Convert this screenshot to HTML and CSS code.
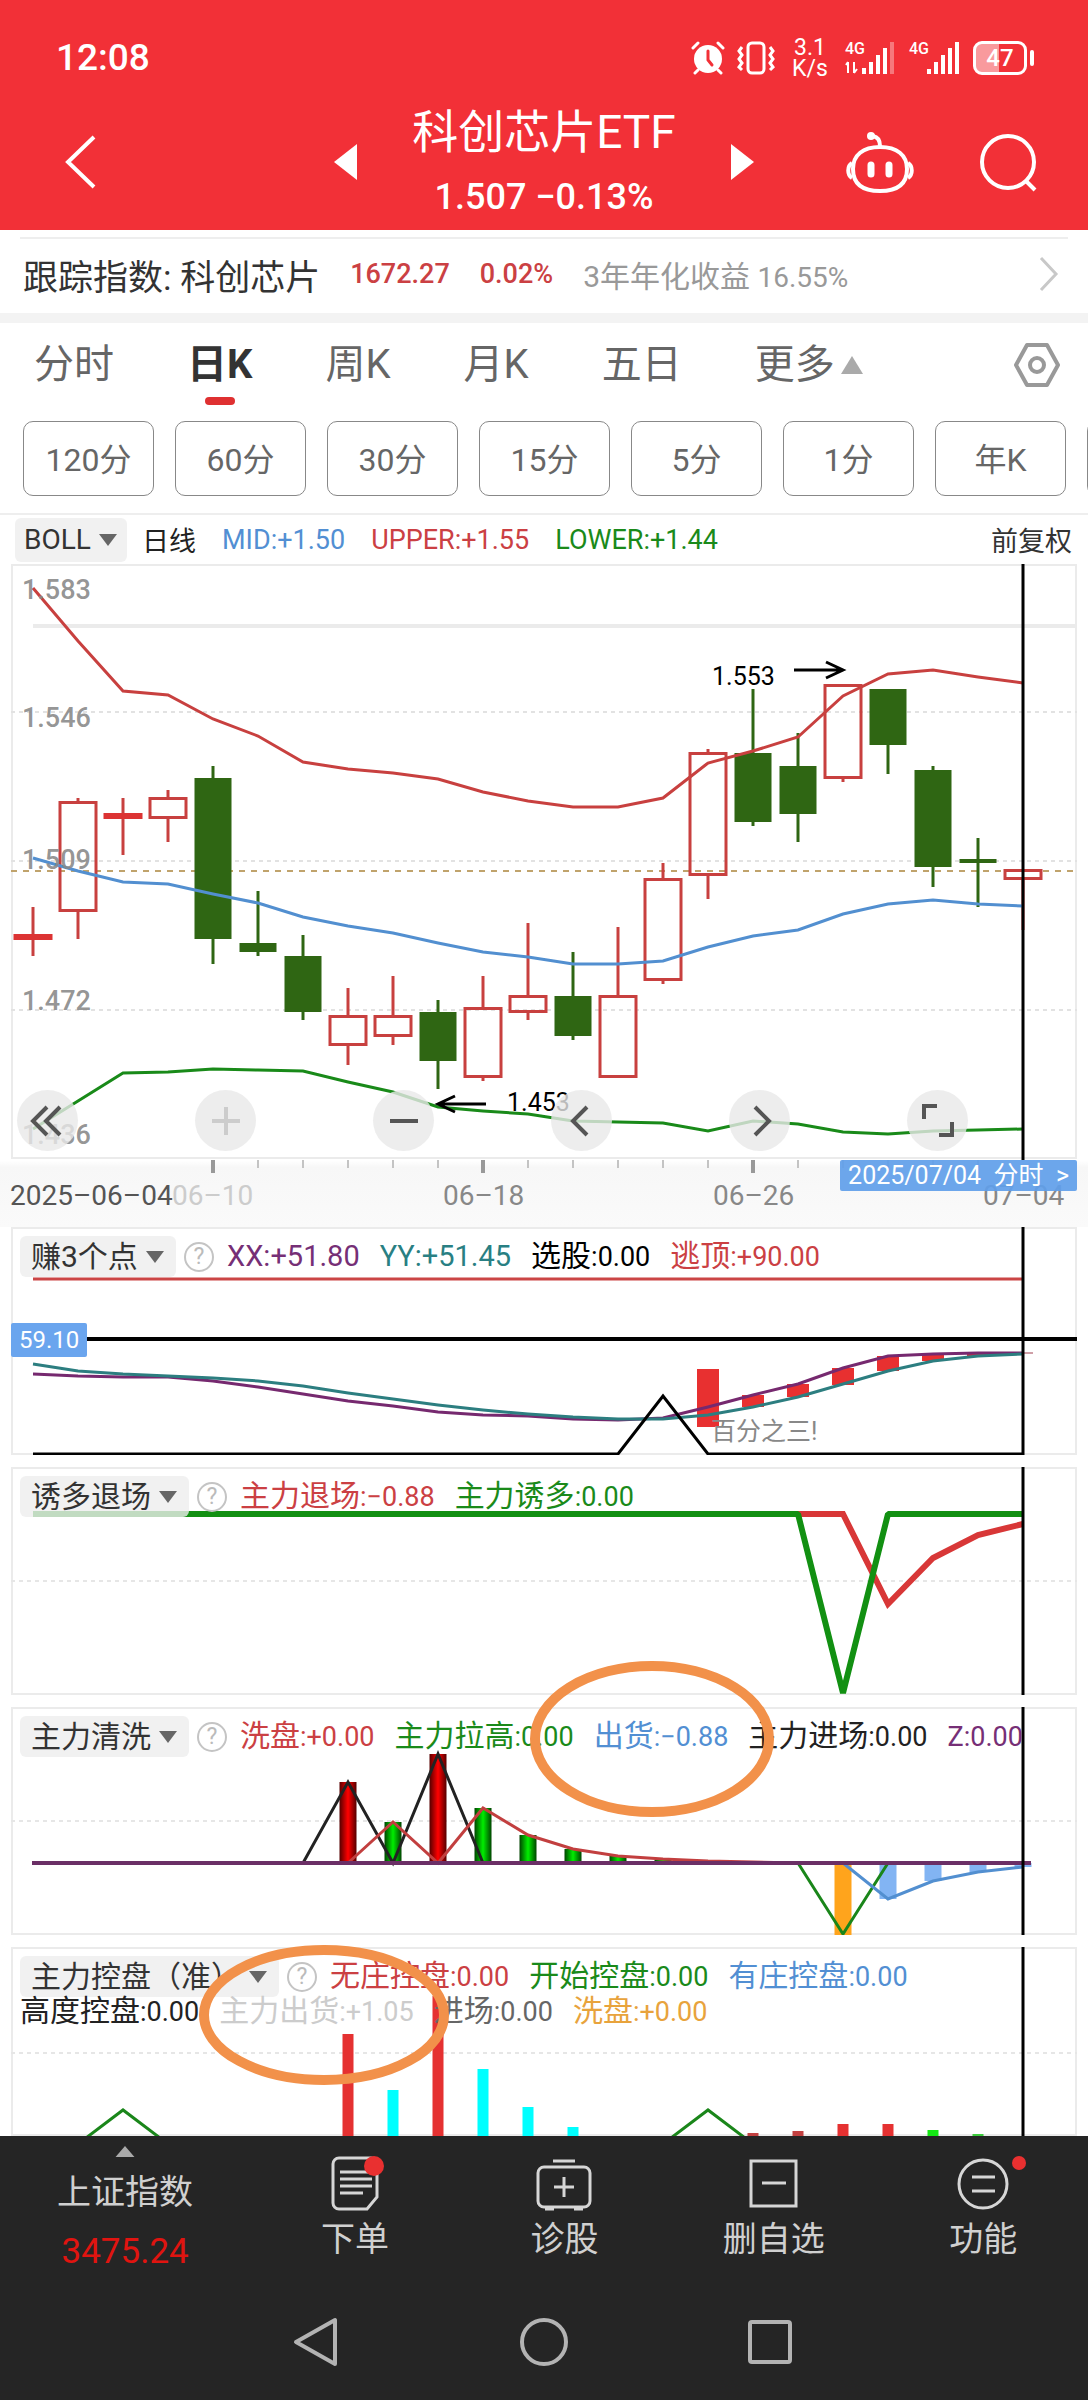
FILE: index.html
```html
<!DOCTYPE html>
<html lang="zh-CN">
<head>
  <meta charset="UTF-8" />
  <meta name="viewport" content="width=device-width, initial-scale=1.0" />
  <title>科创芯片ETF</title>
  <link rel="stylesheet" href="styles.css">
</head>
<body>
  <header class="header">
    <div class="status">
      <span class="clock">12:08</span>
      <div class="status-icons">
        <svg width="34" height="34" viewBox="0 0 34 34" fill="none" stroke="#fff" stroke-width="3" stroke-linecap="round">
          <circle cx="17" cy="18" r="14" fill="#fff" stroke="none" />
          <path d="M2 7l5-5M32 7l-5-5M7 29l-3 3M27 29l3 3" />
          <path d="M17 10v9l4 5" stroke="#f23037" />
        </svg>
        <svg width="38" height="34" viewBox="0 0 38 34" fill="none" stroke="#fff" stroke-width="3">
          <rect x="11" y="2" width="16" height="30" rx="4" />
          <path d="M5 6l-3 4 3 4-3 4 3 4-3 4 3 3M33 6l3 4-3 4 3 4-3 4 3 4-3 3" stroke-width="3" />
        </svg>
        <span class="speed">3.1<br>K/s</span>
        <div class="sim">
          <span>4G</span>
          <svg width="52" height="34" viewBox="0 0 52 34" fill="#fff">
            <path d="M3 21v11M3 21l-2 3M9 21v11M9 32l3-4" stroke="#fff" stroke-width="2" fill="none" />
            <rect x="17" y="27" width="4" height="6" /><rect x="24" y="21" width="4" height="12" />
            <rect x="31" y="14" width="4" height="19" /><rect x="38" y="7" width="4" height="26" />
            <rect x="45" y="1" width="4" height="32" opacity=".35" />
          </svg>
        </div>
        <div class="sim">
          <span>4G</span>
          <svg width="52" height="34" viewBox="0 0 52 34" fill="#fff">
            <rect x="18" y="28" width="4" height="5" /><rect x="25" y="21" width="4" height="12" />
            <rect x="32" y="14" width="4" height="19" /><rect x="39" y="7" width="4" height="26" />
            <rect x="46" y="1" width="4" height="32" />
          </svg>
        </div>
        <div class="battery"><span>47</span></div>
      </div>
    </div>
    <div class="titlebar">
      <button class="icon-btn back" aria-label="返回">
        <svg width="34" height="56" viewBox="0 0 34 56" fill="none" stroke="#fff" stroke-width="4"><path d="M30 3L4 28l26 25" /></svg>
      </button>
      <div class="stock">
        <button class="icon-btn" aria-label="上一只"><svg width="23" height="36" viewBox="0 0 23 36"><path d="M23 0v36L0 18z" fill="#fff" /></svg></button>
        <div class="stock-name">
          <h1>科创芯片ETF</h1>
          <p>1.507 −0.13%</p>
        </div>
        <button class="icon-btn" aria-label="下一只"><svg width="23" height="36" viewBox="0 0 23 36"><path d="M0 0v36l23-18z" fill="#fff" /></svg></button>
      </div>
      <div class="title-actions">
        <button class="icon-btn" aria-label="智能助手">
          <svg width="68" height="64" viewBox="0 0 68 64" fill="none" stroke="#fff" stroke-width="4">
            <path d="M34 17c17 0 27 8 27 22s-8 22-27 22S7 53 7 39s10-22 27-22z" />
            <path d="M6 33c-5 3-5 12 0 15M62 33c5 3 5 12 0 15M34 16c0-6-2-9-7-10" />
            <circle cx="25" cy="6" r="4" fill="#fff" stroke="none" />
            <path d="M25 35v9M43 35v9" stroke-width="7" stroke-linecap="round" />
          </svg>
        </button>
        <button class="icon-btn" aria-label="搜索">
          <svg width="60" height="60" viewBox="0 0 60 60" fill="none" stroke="#fff" stroke-width="4"><circle cx="30" cy="30" r="26" /><path d="M48 49l9 9" /></svg>
        </button>
      </div>
    </div>
  </header>

  <a class="index-row" href="#">
    <span class="index-name">跟踪指数: 科创芯片</span>
    <span class="num red">1672.27</span>
    <span class="num red">0.02%</span>
    <span class="yield">3年年化收益 <span class="num">16.55%</span></span>
    <svg class="chevron" width="20" height="36" viewBox="0 0 20 36" fill="none" stroke="#c8c8c8" stroke-width="3"><path d="M2 2l15 16L2 34" /></svg>
  </a>

  <nav class="tabs">
    <button>分时</button>
    <button class="active">日K</button>
    <button>周K</button>
    <button>月K</button>
    <button>五日</button>
    <button>更多<svg width="22" height="18" viewBox="0 0 22 18"><path d="M11 0l11 18H0z" fill="#aaa" /></svg></button>
    <button class="settings" aria-label="设置">
      <svg width="48" height="46" viewBox="0 0 48 46" fill="none" stroke="#999" stroke-width="4" stroke-linejoin="round"><path d="M14 3h20l11 20-11 20H14L3 23z" /><circle cx="24" cy="23" r="7" /></svg>
    </button>
  </nav>

  <div class="periods">
    <button>120分</button>
    <button>60分</button>
    <button>30分</button>
    <button>15分</button>
    <button>5分</button>
    <button>1分</button>
    <button>年K</button>
    <button aria-label="更多周期"></button>
  </div>

  <div class="boll-row">
    <label class="picker">
      <select aria-label="主图指标"><option>BOLL</option></select>
      <svg width="18" height="12" viewBox="0 0 18 12"><path d="M0 0h18L9 12z" fill="#666" /></svg>
    </label>
    <span class="cycle">日线</span>
    <span class="blue">MID:+1.50</span>
    <span class="red">UPPER:+1.55</span>
    <span class="green">LOWER:+1.44</span>
    <button class="adjust">前复权</button>
  </div>

  <section class="kline">
    <svg id="kline" class="plot" viewBox="0 4 1088 663"></svg>
    <div class="tools">
      <button aria-label="最早"><svg viewBox="0 0 61 61"><path d="M30 17L16 31l14 14M43 17L29 31l14 14" /></svg></button>
      <button aria-label="放大" class="off"><svg viewBox="0 0 61 61"><path d="M17 31h28M31 17v28" /></svg></button>
      <button aria-label="缩小"><svg viewBox="0 0 61 61"><path d="M17 31h28" /></svg></button>
      <button aria-label="左移"><svg viewBox="0 0 61 61"><path d="M36 17L22 31l14 14" /></svg></button>
      <button aria-label="右移"><svg viewBox="0 0 61 61"><path d="M26 17l14 14-14 14" /></svg></button>
      <button aria-label="全屏"><svg viewBox="0 0 61 61"><path d="M17 29V16h13M45 32v13H32" /></svg></button>
    </div>
    <a class="date-tag" href="#">2025/07/04&nbsp; 分时&nbsp; &gt;</a>
  </section>

  <main class="indicators">
    <section class="panel">
      <svg id="earn" class="plot" viewBox="11 0 1066 228"></svg>
      <div class="legend">
        <label class="picker">
          <select aria-label="副图指标1"><option>赚3个点</option></select>
          <svg width="18" height="12" viewBox="0 0 18 12"><path d="M0 0h18L9 12z" fill="#666" /></svg>
        </label>
        <button class="help" aria-label="说明">?</button>
        <span class="latin purple">XX:+51.80</span>
        <span class="latin teal">YY:+51.45</span>
        <span class="black">选股<b>:0.00</b></span>
        <span class="red">逃顶<b>:+90.00</b></span>
      </div>
      <span class="value-tag">59.10</span>
    </section>

    <section class="panel">
      <svg id="lure" class="plot" viewBox="11 0 1066 228"></svg>
      <div class="legend">
        <label class="picker">
          <select aria-label="副图指标2"><option>诱多退场</option></select>
          <svg width="18" height="12" viewBox="0 0 18 12"><path d="M0 0h18L9 12z" fill="#666" /></svg>
        </label>
        <button class="help" aria-label="说明">?</button>
        <span class="red">主力退场<b>:−0.88</b></span>
        <span class="green">主力诱多<b>:0.00</b></span>
      </div>
    </section>

    <section class="panel">
      <svg id="wash" class="plot" viewBox="11 0 1066 228"></svg>
      <div class="legend">
        <label class="picker">
          <select aria-label="副图指标3"><option>主力清洗</option></select>
          <svg width="18" height="12" viewBox="0 0 18 12"><path d="M0 0h18L9 12z" fill="#666" /></svg>
        </label>
        <button class="help" aria-label="说明">?</button>
        <span class="red">洗盘<b>:+0.00</b></span>
        <span class="green">主力拉高<b>:0.00</b></span>
        <span class="blue">出货<b>:−0.88</b></span>
        <span class="dark">主力进场<b>:0.00</b></span>
        <span class="purple"><b>Z:0.00</b></span>
      </div>
    </section>

    <section class="panel last">
      <svg id="control" class="plot" viewBox="11 0 1066 189"></svg>
      <div>
        <div class="legend">
          <label class="picker">
            <select aria-label="副图指标4"><option>主力控盘（准）</option></select>
            <svg width="18" height="12" viewBox="0 0 18 12"><path d="M0 0h18L9 12z" fill="#666" /></svg>
          </label>
          <button class="help" aria-label="说明">?</button>
          <span class="red">无庄控盘<b>:0.00</b></span>
          <span class="green">开始控盘<b>:0.00</b></span>
          <span class="blue">有庄控盘<b>:0.00</b></span>
        </div>
        <div class="legend second">
          <span class="dark">高度控盘<b>:0.00</b></span>
          <span class="light">主力出货<b>:+1.05</b></span>
          <span class="gray">进场<b>:0.00</b></span>
          <span class="orange">洗盘<b>:+0.00</b></span>
        </div>
      </div>
    </section>

    <!-- hand-drawn marks -->
    <svg class="marks" viewBox="0 0 1088 909" fill="none" stroke="#f2914a" stroke-width="10">
      <ellipse cx="652" cy="512" rx="117" ry="73" />
      <ellipse cx="324" cy="788" rx="120" ry="65" />
    </svg>
  </main>

  <footer class="footer">
    <nav class="bottom-nav">
      <a class="market" href="#">
        <svg width="24" height="14" viewBox="0 0 24 14"><path d="M12 0l12 14H0z" fill="#aaa" /></svg>
        <span>上证指数</span>
        <span class="market-value">3475.24</span>
      </a>
      <a href="#">
        <svg width="60" height="56" viewBox="0 0 60 56" fill="none" stroke="#d6d6d6" stroke-width="3">
          <path d="M14 3h32a6 6 0 0 1 6 6v33L42 54H14a6 6 0 0 1-6-6V9a6 6 0 0 1 6-6z" />
          <path d="M15 17h28M15 24h32M15 31h32M15 38h23" />
          <circle cx="49" cy="11" r="10" fill="#e93030" stroke="none" />
        </svg>
        <span>下单</span>
      </a>
      <a href="#">
        <svg width="60" height="56" viewBox="0 0 60 56" fill="none" stroke="#d6d6d6" stroke-width="3">
          <rect x="4" y="12" width="52" height="40" rx="6" />
          <path d="M19 6h22M30 22v20M20 32h20M11 54h9M40 54h9" />
        </svg>
        <span>诊股</span>
      </a>
      <a href="#">
        <svg width="60" height="56" viewBox="0 0 60 56" fill="none" stroke="#d6d6d6" stroke-width="3">
          <rect x="7" y="6" width="45" height="45" /><path d="M18 28h24" />
        </svg>
        <span>删自选</span>
      </a>
      <a href="#">
        <svg width="88" height="56" viewBox="0 0 88 56" fill="none" stroke="#d6d6d6" stroke-width="3">
          <circle cx="44" cy="29" r="24" /><path d="M33 22h23M33 36h23" />
          <circle cx="80" cy="8" r="7" fill="#e93030" stroke="none" />
        </svg>
        <span>功能</span>
      </a>
    </nav>
    <div class="system-nav">
      <button class="icon-btn" aria-label="返回"><svg width="50" height="50" viewBox="0 0 50 50"><path d="M42 3v44L3 25z" /></svg></button>
      <button class="icon-btn" aria-label="主页"><svg width="50" height="50" viewBox="0 0 50 50"><circle cx="25" cy="25" r="22" /></svg></button>
      <button class="icon-btn" aria-label="最近任务"><svg width="50" height="50" viewBox="0 0 50 50"><rect x="5" y="5" width="40" height="40" rx="2" /></svg></button>
    </div>
  </footer>

  <script src="charts.js"></script>
</body>
</html>
```

FILE: styles.css
```css
* {
  box-sizing: border-box;
}

body {
  margin: 0;
  background: #fff;
  color: #333;
  font-family: Roboto, "Noto Sans CJK SC", sans-serif;
}

button,
select {
  margin: 0;
  padding: 0;
  border: none;
  background: none;
  color: inherit;
  font: inherit;
  cursor: pointer;
}

select {
  appearance: none;
}

a {
  color: inherit;
  text-decoration: none;
}

svg {
  display: block;
}

.red { color: #cb4043; }
.green { color: #1a8a1a; }
.blue { color: #528fd3; }
.purple { color: #762f76; }
.teal { color: #297f83; }
.black { color: #000; }
.dark { color: #222; }
.gray { color: #666; }
.light { color: #ccc; }
.orange { color: #e8a33c; }

/* header */
.header {
  background: #f23037;
  color: #fff;
}

.status {
  display: flex;
  align-items: center;
  justify-content: space-between;
  height: 104px;
  padding: 12px 56px 0 56px;
}

.clock {
  font-size: 37px;
  font-weight: 500;
  line-height: 44px;
}

.status-icons {
  display: flex;
  align-items: center;
  gap: 12px;
}

.speed {
  width: 38px;
  margin: 0 4px;
  font-size: 23px;
  line-height: 21px;
  text-align: center;
}

.sim {
  display: grid;
}

.sim > * {
  grid-area: 1 / 1;
}

.sim span {
  font-size: 16px;
  font-weight: 500;
  line-height: 16px;
}

.battery {
  position: relative;
  width: 54px;
  height: 34px;
  margin-right: 5px;
  border: 3px solid #fff;
  border-radius: 9px;
  background: linear-gradient(90deg, #f99a9d 47%, transparent 47%);
  font-size: 24px;
  font-weight: 500;
  line-height: 28px;
  text-align: center;
}

.battery::after {
  content: "";
  position: absolute;
  top: 6px;
  right: -10px;
  width: 4px;
  height: 16px;
  border-radius: 2px;
  background: #fff;
}

.titlebar {
  display: grid;
  grid-template-columns: 1fr auto 1fr;
  align-items: center;
  height: 126px;
  padding: 0 50px 10px;
}

.icon-btn {
  display: block;
}

.back {
  padding-left: 14px;
}

.stock {
  display: flex;
  align-items: center;
  gap: 55px;
}

.stock-name {
  text-align: center;
}

.stock-name h1 {
  margin: 0;
  font-size: 46px;
  font-weight: 400;
  line-height: 56px;
}

.stock-name p {
  margin: 14px 0 0;
  font-size: 36px;
  font-weight: 500;
  line-height: 46px;
}

.title-actions {
  display: flex;
  align-items: center;
  justify-content: flex-end;
  gap: 64px;
}

/* tracked index */
.index-row {
  display: flex;
  align-items: center;
  height: 76px;
  margin: 7px 20px 0;
  padding: 0 9px 4px 3px;
  border-top: 2px solid #eee;
  gap: 30px;
}

.index-name {
  font-size: 35px;
}

.num {
  font-size: 27px;
  font-weight: 500;
}

.yield {
  color: #999;
  font-size: 30px;
}

.yield .num {
  font-size: 28px;
  font-weight: 400;
}

.chevron {
  margin-left: auto;
}

/* period tabs */
.tabs {
  display: flex;
  align-items: center;
  gap: 73px;
  height: 92px;
  padding: 2px 27px 0 34px;
  border-top: 10px solid #f3f3f3;
  color: #666;
  font-size: 40px;
  line-height: 80px;
}

.tabs button {
  display: flex;
  align-items: center;
  gap: 6px;
}

.tabs .active {
  position: relative;
  color: #333;
  font-weight: 700;
}

.tabs .active::after {
  content: "";
  position: absolute;
  bottom: 0;
  left: 50%;
  width: 30px;
  height: 8px;
  margin-left: -15px;
  border-radius: 4px;
  background: #df3031;
}

.tabs .settings {
  margin-left: auto;
}

.periods {
  display: flex;
  gap: 21px;
  padding: 16px 0 17px 23px;
  overflow: hidden;
  border-bottom: 2px solid #eee;
}

.periods button {
  flex: 0 0 131px;
  height: 75px;
  padding-bottom: 4px;
  border: 1px solid #888;
  border-radius: 10px;
  color: #666;
  font-size: 32px;
}

/* indicator picker */
.picker {
  display: flex;
  align-items: center;
  gap: 8px;
  height: 41px;
  padding: 0 12px 0 11px;
  border-radius: 6px;
  background: rgba(238, 238, 238, 0.8);
  color: #333;
}

.boll-row {
  display: flex;
  align-items: center;
  gap: 26px;
  height: 49px;
  padding: 0 16px 0 15px;
  font-size: 27px;
}

.boll-row .picker {
  height: 44px;
  margin-right: -11px;
  padding: 0 10px 0 9px;
  font-size: 28px;
}

.cycle {
  color: #222;
}

.adjust {
  margin-left: auto;
  color: #333;
}

/* k-line */
.kline {
  position: relative;
  background: linear-gradient(#fff 90%, #f7f7f7 91%, #fafafa);
}

.plot {
  width: 100%;
  height: auto;
}

.plot text {
  font-family: Roboto, "Noto Sans CJK SC", sans-serif;
}

.tools {
  position: absolute;
  bottom: 76px;
  left: 17px;
  right: 120px;
  display: flex;
  justify-content: space-between;
}

.tools button {
  width: 61px;
  height: 61px;
  border-radius: 50%;
  background: rgba(232, 232, 232, 0.8);
}

.tools svg {
  fill: none;
  stroke: #555;
  stroke-width: 4px;
}

.tools .off svg {
  stroke: #ccc;
}

.date-tag {
  position: absolute;
  bottom: 36px;
  right: 11px;
  padding: 0 8px;
  border-radius: 2px;
  background: rgba(95, 158, 233, 0.92);
  color: #fff;
  font-size: 25px;
  line-height: 31px;
}

/* sub charts */
.indicators {
  position: relative;
}

.panel {
  display: grid;
  margin: 0 11px 12px;
  box-shadow: inset 0 0 0 2px #ebebeb;
}

.panel > * {
  grid-area: 1 / 1;
}

.panel.last {
  margin-bottom: 0;
}

.legend {
  display: flex;
  align-items: center;
  align-self: start;
  gap: 20px;
  padding: 8px 0 0 9px;
  font-size: 30px;
  line-height: 41px;
  white-space: nowrap;
}

.legend b {
  font-size: 27px;
  font-weight: 400;
}

.legend .latin {
  font-size: 29px;
}

.legend.second {
  padding: 0 0 0 9px;
  line-height: 26px;
}

.help {
  width: 30px;
  height: 30px;
  margin: 0 -7px 0 -12px;
  border: 2px solid #c4c4c4;
  border-radius: 50%;
  color: #bbb;
  font-size: 23px;
  line-height: 26px;
}

.value-tag {
  align-self: start;
  justify-self: start;
  margin-top: 96px;
  padding: 0 8px;
  border-radius: 2px;
  background: #6aa5ee;
  color: #fff;
  font-size: 24px;
  line-height: 34px;
}

.marks {
  position: absolute;
  top: 0;
  left: 0;
  width: 100%;
  height: auto;
  pointer-events: none;
}

/* footer */
.footer {
  position: relative;
  background: #252525;
  color: #d0d0d0;
}

.bottom-nav {
  display: flex;
  height: 148px;
}

.bottom-nav a {
  display: flex;
  flex: 1;
  flex-direction: column;
  align-items: center;
  padding-top: 19px;
  font-size: 34px;
  line-height: 56px;
}

.bottom-nav .market {
  flex: 0 0 23%;
  padding-top: 10px;
}

.market svg {
  margin-bottom: 7px;
}

.market-value {
  color: #e01410;
  font-size: 35px;
  line-height: 64px;
}

.system-nav {
  display: flex;
  justify-content: center;
  gap: 176px;
  height: 116px;
  padding-top: 33px;
}

.system-nav button {
  align-self: flex-start;
  height: 50px;
}

.system-nav svg {
  fill: none;
  stroke: #b3b3b3;
  stroke-width: 4px;
  stroke-linejoin: round;
}
```

FILE: charts.js
```js
const NS = 'http://www.w3.org/2000/svg';
const RED = '#c8403f';
const GREEN = '#2f6613';

// x of the n-th trading day
const px = i => 33 + 45 * i;

function add(id, tag, attrs, text) {
  const el = document.createElementNS(NS, tag);
  for (const key in attrs) el.setAttribute(key, attrs[key]);
  if (text) el.textContent = text;
  document.getElementById(id).appendChild(el);
  return el;
}

function line(id, ys, color, width, start = 0) {
  const points = ys.map((y, i) => px(start + i) + ',' + y).join(' ');
  add(id, 'polyline', { points, fill: 'none', stroke: color, 'stroke-width': width });
}

function bar(id, i, y1, y2, w, fill) {
  add(id, 'rect', { x: px(i) - w / 2, y: y1, width: w, height: y2 - y1, fill });
}

function rule(id, x1, y1, x2, y2, color, width, dash) {
  const attrs = { x1, y1, x2, y2, stroke: color, 'stroke-width': width };
  if (dash) attrs['stroke-dasharray'] = dash;
  add(id, 'line', attrs);
}

function gradient(id, name, edge, middle) {
  const g = add(id, 'linearGradient', { id: name });
  [[0, edge], [0.5, middle], [1, edge]].forEach(([offset, color]) => {
    const stop = document.createElementNS(NS, 'stop');
    stop.setAttribute('offset', offset);
    stop.setAttribute('stop-color', color);
    g.appendChild(stop);
  });
}

function drawKline() {
  const id = 'kline';
  add(id, 'rect', { x: 12, y: 5, width: 1064, height: 593, fill: '#fff', stroke: '#ebebeb', 'stroke-width': 2 });
  rule(id, 33, 66, 1077, 66, '#ebebeb', 4);
  [152, 301, 450].forEach(y => rule(id, 11, y, 1077, y, '#e2e2e2', 2, '4 4'));
  rule(id, 11, 311, 1077, 311, '#c0a36c', 2, '6 6');

  // high, body top, body bottom, low, up
  const candles = [
    [347, 374, 380, 396, 1], [238, 241, 352, 379, 1], [238, 253, 259, 295, 1], [230, 237, 259, 282, 1],
    [206, 218, 379, 404, 0], [331, 383, 392, 396, 0], [375, 396, 452, 460, 0], [428, 455, 486, 505, 1],
    [416, 455, 477, 485, 1], [440, 452, 501, 529, 0], [416, 447, 518, 521, 1], [363, 435, 453, 460, 1],
    [392, 436, 476, 480, 0], [367, 435, 518, 518, 1], [303, 318, 421, 424, 1], [189, 192, 316, 339, 1],
    [129, 193, 262, 266, 0], [173, 206, 254, 282, 0], [124, 124, 219, 222, 1], [129, 129, 185, 214, 0],
    [206, 210, 307, 327, 0], [278, 299, 303, 347, 0], [309, 309, 320, 370, 1]
  ];
  candles.forEach(([high, top, bottom, low, up], i) => {
    const color = up ? RED : GREEN;
    rule(id, px(i), high, px(i), top, color, 3);
    rule(id, px(i), bottom, px(i), low, color, 3);
    if (!up) {
      bar(id, i, top, bottom, 37, GREEN);
    } else if (bottom - top < 8) {
      bar(id, i, top, bottom, 39, '#dc3333');
    } else {
      add(id, 'rect', { x: px(i) - 18, y: top + 1.5, width: 36, height: bottom - top - 3, fill: 'none', stroke: RED, 'stroke-width': 3 });
    }
  });

  line(id, [28, 81, 131, 135, 159, 176, 202, 209, 213, 219, 232, 241, 247, 247, 238, 203, 191, 177, 136, 114, 110, 117, 123], RED, 3);
  line(id, [298, 311, 322, 324, 334, 343, 357, 366, 373, 383, 392, 397, 404, 404, 401, 387, 376, 370, 354, 344, 340, 344, 346], '#528fd0', 3);
  line(id, [569, 541, 513, 512, 509, 510, 511, 522, 532, 547, 551, 554, 561, 562, 563, 571, 561, 564, 572, 574, 571, 570, 569], '#198a19', 3);

  [['1.583', 39], ['1.546', 167], ['1.509', 309], ['1.472', 450], ['1.436', 584]].forEach(([label, y]) => {
    add(id, 'text', { x: 22, y, fill: '#888', 'fill-opacity': 0.9, 'font-size': 27, 'font-weight': 500 }, label);
  });

  add(id, 'text', { x: 712, y: 125, fill: '#000', 'font-size': 25 }, '1.553');
  add(id, 'path', { d: 'M794 110h48M826 102l17 8-17 8', fill: 'none', stroke: '#000', 'stroke-width': 3 });
  add(id, 'text', { x: 507, y: 551, fill: '#000', 'font-size': 25 }, '1.453');
  add(id, 'path', { d: 'M486 544h-47M455 536l-17 8 17 8', fill: 'none', stroke: '#000', 'stroke-width': 3 });

  for (let i = 4; i < 22; i++) {
    const major = [4, 10, 16].includes(i);
    rule(id, px(i), 600, px(i), major ? 613 : 608, major ? '#999' : '#c4c4c4', major ? 4 : 2);
  }
  rule(id, 1023, 4, 1023, 600, '#000', 3);

  add(id, 'text', { x: 172, y: 645, fill: '#ccc', 'font-size': 28 }, '06–10');
  add(id, 'text', { x: 10, y: 645, fill: '#555', 'font-size': 28 }, '2025–06–04');
  add(id, 'text', { x: 443, y: 645, fill: '#888', 'font-size': 28 }, '06–18');
  add(id, 'text', { x: 713, y: 645, fill: '#888', 'font-size': 28 }, '06–26');
  add(id, 'text', { x: 983, y: 645, fill: '#888', 'font-size': 28 }, '07–04');
}

function drawEarn() {
  const id = 'earn';
  rule(id, 33, 52, 1023, 52, '#cb4545', 3);
  [[15, 142, 200], [16, 168, 180], [17, 157, 170], [18, 141, 158], [19, 129, 144], [20, 127, 134], [21, 126, 129]]
    .forEach(([i, y1, y2]) => bar(id, i, y1, y2, 22, '#e83030'));
  rule(id, 1023, 126, 1033, 126, '#a04050', 1);
  line(id, [147, 149, 150, 150, 154, 160, 167, 174, 179, 185, 188, 189, 192, 193, 191, 180, 168, 157, 141, 129, 127, 126, 126], '#76296f', 3);
  line(id, [137, 144, 147, 149, 151, 154, 159, 166, 172, 178, 183, 187, 190, 192, 192, 188, 180, 170, 157, 144, 134, 129, 127], '#2c7e80', 3);
  add(id, 'polyline', { points: '33,227 618,227 663,169 708,227 1023,227', fill: 'none', stroke: '#000', 'stroke-width': 3 });
  add(id, 'text', { x: 711, y: 213, fill: '#888', 'font-size': 25 }, '百分之三!');
  rule(id, 11, 112, 1077, 112, '#000', 4);
  rule(id, 1023, 0, 1023, 228, '#000', 3);
}

function drawLure() {
  const id = 'lure';
  rule(id, 11, 114, 1077, 114, '#e6e6e6', 2, '4 4');
  line(id, [47, 47, 137, 91, 68, 57], '#d83737', 6, 17);
  add(id, 'polyline', { points: '33,47 798,47 843,226 888,47 1023,47', fill: 'none', stroke: '#129012', 'stroke-width': 6, 'stroke-linejoin': 'bevel' });
  rule(id, 1023, 0, 1023, 228, '#000', 3);
}

function drawWash() {
  const id = 'wash';
  const base = 156;
  rule(id, 11, 114, 1077, 114, '#e6e6e6', 2, '4 4');
  gradient(id, 'redBar', '#500', '#f00');
  gradient(id, 'greenBar', '#040', '#0e0');
  [[7, 75], [9, 47]].forEach(([i, y]) => bar(id, i, y, base, 17, 'url(#redBar)'));
  [[8, 115], [10, 101], [11, 128], [12, 142], [13, 149], [14, 153]].forEach(([i, y]) => bar(id, i, y, base, 17, 'url(#greenBar)'));
  bar(id, 18, base, 228, 17, '#ffa41c');
  [[19, 192], [20, 174], [21, 165], [22, 160]].forEach(([i, y]) => bar(id, i, base, y, 17, '#82b4f3'));
  line(id, [base, 75, base, 47, base], '#222', 3, 6);
  line(id, [base, 115, base, 101, 128, 142, 149, 152, 154, 155, base], '#c23f3f', 3, 7);
  line(id, [base, 227, base], '#1a861a', 3, 17);
  line(id, [base, 192, 174, 165, 160], '#528fd0', 3, 18);
  rule(id, 32, base, 1031, base, '#6b2f66', 4);
  rule(id, 1023, 0, 1023, 228, '#000', 3);
}

function drawControl() {
  const id = 'control';
  const cyan = '#00ffff';
  rule(id, 11, 106, 1077, 106, '#e6e6e6', 2, '4 4');
  [
    [7, 87, '#e53131'], [8, 143, cyan], [9, 49, '#e53131'], [10, 122, cyan], [11, 160, cyan], [12, 180, cyan],
    [16, 186, '#c24040'], [17, 184, '#c24040'], [18, 177, '#e53131'], [19, 177, '#e53131'], [20, 183, '#14e814'], [21, 187, '#3ccc3c']
  ].forEach(([i, y, color]) => bar(id, i, y, 189, 11, color));
  line(id, [197, 163, 197], '#1a861a', 3, 1);
  line(id, [197, 163, 197], '#1a861a', 3, 14);
  rule(id, 1023, 0, 1023, 189, '#000', 3);
}

drawKline();
drawEarn();
drawLure();
drawWash();
drawControl();
```
